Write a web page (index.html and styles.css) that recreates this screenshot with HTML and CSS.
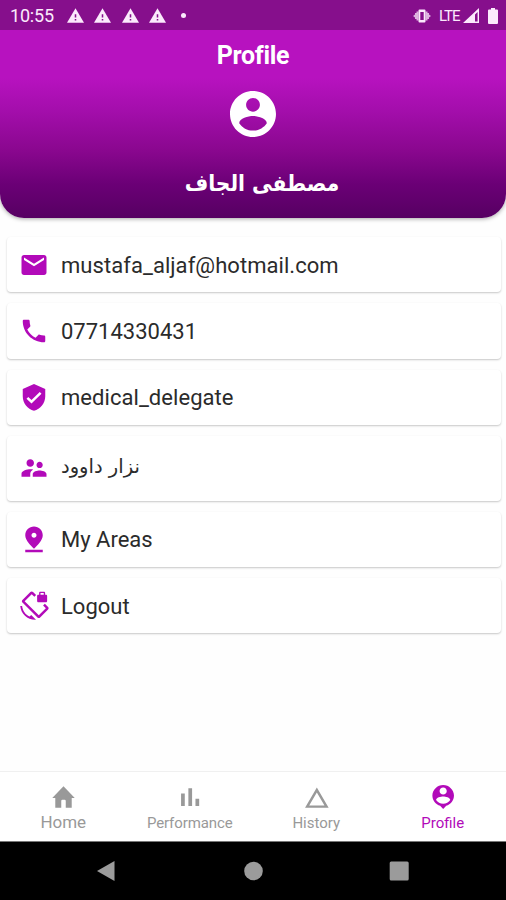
FILE: index.html
```html
<!DOCTYPE html>
<html lang="en">
<head>
<meta charset="utf-8">
<title>Profile</title>
<link rel="stylesheet" href="styles.css">
</head>
<body>
<div class="app">
  <header class="hero">
    <div class="status">
      <span class="clock">10:55</span>
      <svg class="warn" viewBox="1 2 22 19"><path d="M1 21h22L12 2 1 21z"/><path class="mark" d="M13 18h-2v-2h2v2zm0-4h-2v-4h2v4z"/></svg>
      <svg class="warn" viewBox="1 2 22 19"><path d="M1 21h22L12 2 1 21z"/><path class="mark" d="M13 18h-2v-2h2v2zm0-4h-2v-4h2v4z"/></svg>
      <svg class="warn" viewBox="1 2 22 19"><path d="M1 21h22L12 2 1 21z"/><path class="mark" d="M13 18h-2v-2h2v2zm0-4h-2v-4h2v4z"/></svg>
      <svg class="warn" viewBox="1 2 22 19"><path d="M1 21h22L12 2 1 21z"/><path class="mark" d="M13 18h-2v-2h2v2zm0-4h-2v-4h2v4z"/></svg>
      <span class="dot"></span>
      <svg class="vibrate" viewBox="0 0 18 14"><path fill-rule="evenodd" d="M6.500 0.500h5a1 1 0 0 1 1 1v11a1 1 0 0 1-1 1h-5a1 1 0 0 1-1-1v-11a1 1 0 0 1 1-1zM7.300 3v8h3.400V3z"/><path opacity=".75" d="M5.500 2.500v9H3.500V10H2V8.500L0 7l2-1.500V4h1.500V2.500zM12.500 2.500v9h2V10H16V8.500L18 7l-2-1.500V4h-1.500V2.500z"/></svg>
      <span class="lte">LTE</span>
      <svg class="signal" viewBox="0 0 16 15"><path fill-rule="evenodd" d="M0 15L16 0v15zM12 6.500v7h2.600v-9.500z"/></svg>
      <svg class="battery" viewBox="0 0 10 16"><path d="M3 0h4v1.500h2a1 1 0 0 1 1 1V15a1 1 0 0 1-1 1H1a1 1 0 0 1-1-1V2.500a1 1 0 0 1 1-1h2z"/></svg>
    </div>
    <h1 class="title">Profile</h1>
    <svg class="avatar" viewBox="2 2 20 20"><path d="M12 2C6.480 2 2 6.480 2 12s4.480 10 10 10 10-4.480 10-10S17.520 2 12 2zm0 3c1.660 0 3 1.340 3 3s-1.340 3-3 3-3-1.340-3-3 1.340-3 3-3zm0 14.200c-2.500 0-4.710-1.280-6-3.220.03-1.990 4-3.080 6-3.080 1.990 0 5.970 1.090 6 3.080-1.290 1.940-3.500 3.220-6 3.220z"/></svg>
    <div class="name" dir="rtl" lang="ar">مصطفى الجاف</div>
  </header>

  <main class="list">
    <div class="card"><svg class="icon" viewBox="0 0 24 24"><path d="M20 4H4c-1.100 0-1.990.9-1.990 2L2 18c0 1.100.9 2 2 2h16c1.100 0 2-.9 2-2V6c0-1.100-.9-2-2-2zm0 4l-8 5-8-5V6l8 5 8-5v2z"/></svg><span class="email">mustafa_aljaf@hotmail.com</span></div>
    <div class="card"><svg class="icon" viewBox="0 0 24 24"><path d="M6.620 10.790c1.440 2.830 3.760 5.140 6.590 6.590l2.200-2.200c.27-.27.67-.36 1.020-.24 1.120.37 2.330.57 3.570.57.55 0 1 .45 1 1V20c0 .55-.45 1-1 1-9.390 0-17-7.610-17-17 0-.55.45-1 1-1h3.500c.55 0 1 .45 1 1 0 1.250.2 2.450.57 3.570.11.35.03.74-.25 1.020l-2.200 2.200z"/></svg><span>07714330431</span></div>
    <div class="card"><svg class="icon" viewBox="0 0 24 24"><path d="M12 1L3 5v6c0 5.550 3.840 10.740 9 12 5.160-1.260 9-6.450 9-12V5l-9-4zm-2 16l-4-4 1.410-1.410L10 14.170l6.590-6.590L18 9l-8 8z" transform="translate(0 .7) scale(1 .97)"/></svg><span class="role">medical_delegate</span></div>
    <div class="card tall"><svg class="icon" viewBox="0 0 24 24"><path d="M16.500 12c1.380 0 2.490-1.120 2.490-2.500S17.880 7 16.500 7C15.120 7 14 8.120 14 9.500s1.120 2.500 2.500 2.500zM9 11c1.660 0 2.990-1.340 2.990-3S10.660 5 9 5C7.340 5 6 6.340 6 8s1.340 3 3 3zm7.500 3c-1.830 0-5.500.92-5.500 2.750V19h11v-2.250c0-1.830-3.670-2.750-5.500-2.750zM9 13c-2.330 0-7 1.170-7 3.500V19h7v-2.250c0-.85.33-2.340 2.370-3.470C10.500 13.100 9.660 13 9 13z"/></svg><span class="arabic" dir="rtl" lang="ar">نزار داوود</span></div>
    <div class="card"><svg class="icon" viewBox="0 0 24 24"><path d="M19 9c0-3.870-3.130-7-7-7S5 5.130 5 9c0 4.100 4.500 8.300 7 10.800 2.500-2.500 7-6.700 7-10.800zm-9 0c0-1.100.9-2 2-2s2 .9 2 2-.89 2-2 2c-1.100 0-2-.9-2-2zM5 20.500v2h14v-2H5z"/></svg><span>My Areas</span></div>
    <div class="card"><svg class="icon" viewBox="0 0 24 24"><path d="M23.250 12.770l-2.570-2.570-1.410 1.410 2.220 2.220-5.660 5.660L4.510 8.170l5.660-5.660 2.100 2.100 1.410-1.410L11.230.75c-.59-.59-1.540-.59-2.120 0L2.750 7.110c-.59.59-.59 1.540 0 2.120l12.020 12.020c.59.59 1.540.59 2.120 0l6.360-6.360c.59-.59.59-1.540 0-2.120zM8.470 20.480C5.200 18.940 2.860 15.760 2.500 12H1c.51 6.160 5.660 11 11.950 11l.66-.03-3.810-3.820-1.330 1.330zM15.500 9h6c.55 0 1-.45 1-1V4c0-.55-.45-1-1-1h-.6V1.500c0-.6-.4-1-1-1h-2.800c-.6 0-1 .4-1 1V3h-.6c-.55 0-1 .45-1 1v4c0 .55.45 1 1 1zM17.200 1.500h2.600V3h-2.600z"/></svg><span>Logout</span></div>
  </main>

  <nav class="tabs">
    <div class="tab home"><svg viewBox="0 0 24 24"><path d="M10 21V15q0-1 1-1h2q1 0 1 1v6h5.300v-8.500H22L12 2 2 12.500h2.700V21z"/></svg><span>Home</span></div>
    <div class="tab"><svg viewBox="0 0 24 24"><path d="M4.500 8.500h3.300v11H4.500zM17.300 13.200h3.300v6.300h-3.300zM11 3.700h3.300v15.800H11z"/></svg><span class="perf">Performance</span></div>
    <div class="tab"><svg viewBox="0 0 24 24"><path fill-rule="evenodd" d="M12.300 3.200L1.800 21h21zM12.300 7.500L19.100 19.100H5.500z"/></svg><span>History</span></div>
    <div class="tab active"><svg viewBox="0 0 24 24"><path transform="translate(.6 -.2)" d="M12 1c-5.200 0-9.600 4.300-9.600 9.500 0 4.400 2.900 8 6.900 9.100L12 22.500l2.700-2.900c4-1.100 6.900-4.700 6.900-9.100C21.600 5.300 17.200 1 12 1zm0 2.200c1.750 0 3.200 1.400 3.200 3.200S13.750 9.600 12 9.600 8.800 8.200 8.800 6.400 10.250 3.200 12 3.200zm0 14.500c-2.600 0-4.900-1.300-6.300-3.300.03-2.100 4.200-3.100 6.300-3.100s6.270 1 6.300 3.100c-1.400 2-3.700 3.300-6.300 3.300z"/></svg><span>Profile</span></div>
  </nav>

  <footer class="system">
    <svg viewBox="0 0 20 22"><path d="M1 11L18.500 1v20z"/></svg>
    <svg viewBox="0 0 20 22"><circle cx="10.500" cy="11" r="9.300"/></svg>
    <svg viewBox="0 0 20 22"><rect x=".7" y="1.500" width="19" height="19" rx="1.500"/></svg>
  </footer>
</div>
</body>
</html>
```
FILE: styles.css
```css
* { box-sizing: border-box; }

body {
  margin: 0;
  background: #fefefe;
  color: #2b2b2b;
  font-family: Roboto, "DejaVu Sans", sans-serif;
}

svg { display: block; flex: none; fill: currentColor; }

.app {
  display: flex;
  flex-direction: column;
  height: 900px;
  overflow: hidden;
}

.hero {
  display: flex;
  flex-direction: column;
  align-items: center;
  flex: none;
  height: 218px;
  color: #fff;
  background: linear-gradient(#b712bf 0, #b712bf 78px, #a40eac 110px, #8a078f 150px, #6b0076 184px, #560062 218px);
  border-radius: 0 0 24px 24px;
  box-shadow: 0 1px 4px rgba(0, 0, 0, .35);
  overflow: hidden;
}

.status {
  display: flex;
  align-items: center;
  width: 100%;
  height: 30px;
  flex: none;
  padding: 1px 8px 0 10px;
  background: #860f8c;
  color: #fbeafc;
}

.clock { width: 57px; font-size: 18px; letter-spacing: -.2px; }
.warn { width: 17px; height: 15px; margin-right: 10.300px; }
.mark { fill: #860f8c; }
.dot { width: 5px; height: 5px; margin-left: 5px; border-radius: 50%; background: currentColor; }
.vibrate { width: 18px; height: 14px; margin-left: auto; }
.lte { width: 24px; margin-left: 8px; font-size: 15px; letter-spacing: -1px; }
.signal { width: 16px; height: 15px; }
.battery { width: 10px; height: 16px; margin-left: 9px; }

.title {
  margin: 11px 0 0;
  font-size: 25px;
  line-height: 30px;
  font-weight: 700;
  letter-spacing: -.3px;
}

.avatar { width: 46px; height: 46px; margin-top: 20px; }

.name {
  margin: 29px 0 0 18px;
  font-family: "DejaVu Sans Condensed", "DejaVu Sans", sans-serif;
  font-size: 22.500px;
  font-stretch: condensed;
  line-height: 34px;
  font-weight: 700;
}

.list {
  display: flex;
  flex-direction: column;
  gap: 11.200px;
  flex: 1;
  padding: 19px 5px 0 7px;
}

.card {
  display: flex;
  align-items: center;
  height: 55.200px;
  flex: none;
  padding-left: 12px;
  gap: 12px;
  border-radius: 4px;
  background: #fff;
  box-shadow: 0 1px 2px rgba(0, 0, 0, .22);
  font-size: 22px;
  line-height: 28px;
}

.card span { padding-top: 2px; }
.card .email, .card .role { letter-spacing: .05px; }
.tall { height: 64.500px; }
.icon { width: 30px; height: 30px; color: #b20ab9; }
.card .arabic { padding: 0; margin-top: -3px; font-family: "DejaVu Sans", sans-serif; font-size: 19.500px; }

.tabs {
  display: grid;
  grid-template-columns: repeat(4, 1fr);
  flex: none;
  height: 70px;
  border-top: 1px solid #f0f0f0;
  background: #fff;
  color: #999;
}

.tab {
  display: flex;
  flex-direction: column;
  align-items: center;
  padding-top: 12px;
  font-size: 15px;
  line-height: 20px;
}

.tab svg { width: 27px; height: 27px; margin-bottom: 2px; }
.perf { letter-spacing: -.1px; }
.home { font-size: 17px; }
.home span { margin-top: -1px; }
.active { color: #b20ab9; }

.system {
  display: flex;
  justify-content: space-between;
  align-items: center;
  flex: none;
  height: 59px;
  padding: 0 97px 0 96px;
  border-top: 1px solid #777;
  background: #000;
  color: #9b9b9b;
}

.system svg { width: 20px; height: 22px; }
```
